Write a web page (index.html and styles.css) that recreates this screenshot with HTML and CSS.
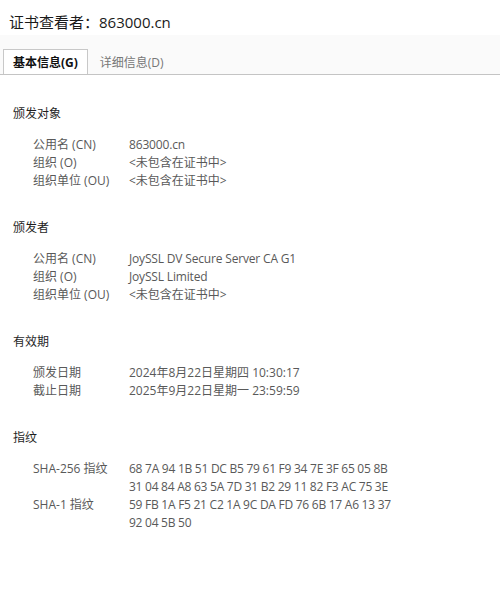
FILE: index.html
```html
<!DOCTYPE html>
<html lang="zh-CN">
<head>
<meta charset="utf-8">
<title>证书查看者：863000.cn</title>
<link rel="stylesheet" href="styles.css">
</head>
<body>
<header class="title">证书查看者：863000.cn</header>
<nav class="tabs">
  <div class="tab active">基本信息(G)</div>
  <div class="tab">详细信息(D)</div>
</nav>
<main class="content">
  <section class="group">
    <h2 class="heading">颁发对象</h2>
    <div class="rows">
      <div class="label">公用名 (CN)</div><div class="value latin">863000.cn</div>
      <div class="label">组织 (O)</div><div class="value">&lt;未包含在证书中&gt;</div>
      <div class="label">组织单位 (OU)</div><div class="value">&lt;未包含在证书中&gt;</div>
    </div>
  </section>
  <section class="group">
    <h2 class="heading">颁发者</h2>
    <div class="rows">
      <div class="label">公用名 (CN)</div><div class="value latin">JoySSL DV Secure Server CA G1</div>
      <div class="label">组织 (O)</div><div class="value latin">JoySSL Limited</div>
      <div class="label">组织单位 (OU)</div><div class="value">&lt;未包含在证书中&gt;</div>
    </div>
  </section>
  <section class="group">
    <h2 class="heading">有效期</h2>
    <div class="rows">
      <div class="label">颁发日期</div><div class="value">2024年8月22日星期四 10:30:17</div>
      <div class="label">截止日期</div><div class="value">2025年9月22日星期一 23:59:59</div>
    </div>
  </section>
  <section class="group">
    <h2 class="heading">指纹</h2>
    <div class="rows">
      <div class="label">SHA-256 指纹</div><div class="value hex">68 7A 94 1B 51 DC B5 79 61 F9 34 7E 3F 65 05 8B<br>31 04 84 A8 63 5A 7D 31 B2 29 11 82 F3 AC 75 3E</div>
      <div class="label">SHA-1 指纹</div><div class="value hex">59 FB 1A F5 21 C2 1A 9C DA FD 76 6B 17 A6 13 37<br>92 04 5B 50</div>
    </div>
  </section>
</main>
</body>
</html>
```
FILE: styles.css
```css
html, body {
  margin: 0;
  padding: 0;
  background: #ffffff;
}
body {
  font-family: "Open Sans", "Noto Sans CJK SC", sans-serif;
  font-size: 12px;
  color: #595959;
}
.title {
  height: 35px;
  box-sizing: border-box;
  padding: 12px 0 0 9px;
  font-size: 15px;
  line-height: 20px;
  color: #1a1a1a;
}
.tabs {
  display: flex;
  align-items: flex-end;
  height: 40px;
  box-sizing: border-box;
  padding: 0 0 0 3px;
  background: #fafafa;
  border-bottom: 1px solid #c4c4c4;
}
.tab {
  height: 24px;
  line-height: 25px;
  padding: 0 10px 0 11px;
  color: #777777;
  font-size: 12px;
  border: 1px solid transparent;
  border-bottom: none;
}
.tab.active {
  background: #ffffff;
  border-color: #c8c8c8;
  color: #111111;
  font-weight: bold;
  padding: 0 9px 0 9px;
}
.content {
  padding: 30px 0 0 13px;
}
.group {
  margin: 0 0 29px 0;
}
.heading {
  margin: 0 0 13px 0;
  font-size: 12px;
  font-weight: normal;
  line-height: 18px;
  color: #1f1f1f;
}
.rows {
  display: grid;
  grid-template-columns: 96px auto;
  padding-left: 20px;
  line-height: 18px;
}
.label, .value {
  color: #595959;
}
.value.latin {
  letter-spacing: -0.17px;
}
.value.hex {
  letter-spacing: -0.26px;
}
```
